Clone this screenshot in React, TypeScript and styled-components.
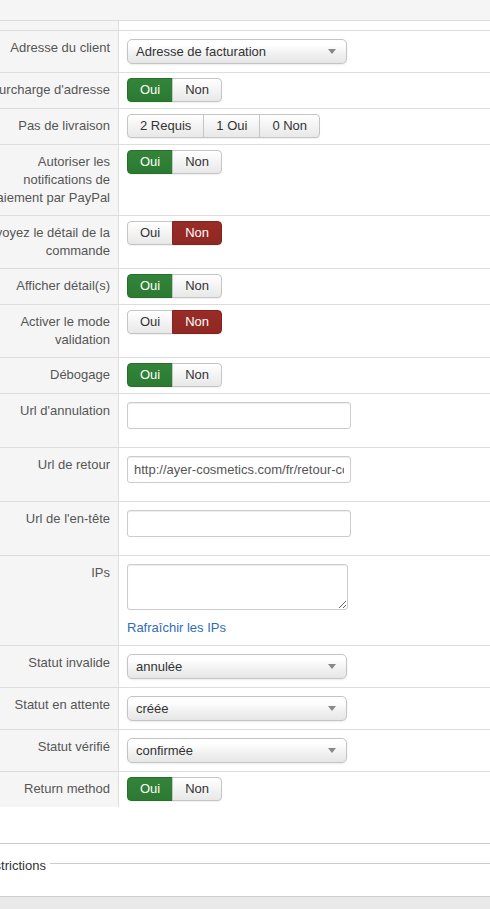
import * as React from 'react';
import styled, { createGlobalStyle, css } from 'styled-components';

const GlobalStyle = createGlobalStyle`
  html, body {
    margin: 0;
    padding: 0;
    background: #fff;
    overflow: hidden;
  }
  body {
    font-family: "Liberation Sans", Arial, sans-serif;
    font-size: 13px;
    color: #333;
  }
`;

const Page = styled.div`
  margin-left: -42px;
  width: calc(100% + 42px);
`;

const TopBar = styled.div`
  height: 20px;
  background: #f5f5f5;
`;

const Table = styled.div`
  display: flex;
  flex-direction: column;
`;

const Row = styled.div`
  display: flex;
  border-top: 1px solid #ddd;
`;

const Label = styled.div`
  box-sizing: border-box;
  width: 161px;
  flex: none;
  padding: 8px 8px 8px 12px;
  background: #f5f5f5;
  border-right: 1px solid #ddd;
  text-align: right;
  line-height: 18px;
  color: #555;
`;

const Cell = styled.div`
  flex: 1;
  padding: 5px 0 6px 8px;
`;

const SpacerCell = styled(Cell)`
  padding: 0;
  height: 9px;
`;

const Select = styled.div`
  box-sizing: border-box;
  width: 220px;
  height: 25px;
  margin: 3px 0 2px;
  padding: 0 8px;
  display: flex;
  align-items: center;
  justify-content: space-between;
  border: 1px solid #c4c4c4;
  border-radius: 5px;
  background: linear-gradient(#ffffff 20%, #f1f1f1 60%, #e6e6e6);
  box-shadow: 0 1px 2px rgba(0, 0, 0, 0.08);
  color: #333;
`;

const Caret = styled.span`
  width: 0;
  height: 0;
  margin-right: 2px;
  border-left: 4px solid transparent;
  border-right: 4px solid transparent;
  border-top: 5px solid #888;
`;

const BtnGroup = styled.div`
  display: inline-flex;
  height: 24px;
  border-radius: 4px;
  box-shadow: 0 1px 1px rgba(0, 0, 0, 0.06);
`;

type Tone = 'success' | 'danger' | 'none';

const Btn = styled.button<{ $tone: Tone }>`
  box-sizing: border-box;
  height: 24px;
  margin: 0;
  padding: 0 12px;
  font: inherit;
  font-size: 13px;
  line-height: 22px;
  color: #333;
  border: 1px solid #c5c5c5;
  background: linear-gradient(#ffffff, #e8e8e8);
  cursor: pointer;

  & + & {
    margin-left: -1px;
  }
  &:first-child {
    border-radius: 4px 0 0 4px;
  }
  &:last-child {
    border-radius: 0 4px 4px 0;
  }

  ${(p) =>
    p.$tone === 'success' &&
    css`
      color: #fff;
      border-color: #2a6e2d;
      background: linear-gradient(#33843a, #2c7a31);
    `}
  ${(p) =>
    p.$tone === 'danger' &&
    css`
      color: #fff;
      border-color: #842420;
      background: linear-gradient(#9a2c27, #8f2823);
    `}
`;

const TextInput = styled.input`
  box-sizing: border-box;
  display: block;
  width: 224px;
  height: 27px;
  margin: 3px 0 12px;
  padding: 0 6px;
  font: inherit;
  font-size: 13px;
  color: #555;
  border: 1px solid #ccc;
  border-radius: 3px;
  box-shadow: inset 0 1px 1px rgba(0, 0, 0, 0.075);
  outline: none;
`;

const TextArea = styled.textarea`
  box-sizing: border-box;
  display: block;
  width: 221px;
  height: 46px;
  margin: 3px 0 9px;
  padding: 4px 6px;
  font: inherit;
  border: 1px solid #ccc;
  border-radius: 3px;
  box-shadow: inset 0 1px 1px rgba(0, 0, 0, 0.075);
  outline: none;
`;

const Link = styled.a`
  display: block;
  line-height: 18px;
  margin-bottom: 2px;
  color: #2f6db5;
  text-decoration: none;
`;

const Divider = styled.div`
  margin-top: 36px;
  border-top: 1px solid #ccc;
`;

const Legend = styled.div`
  display: flex;
  align-items: center;
  gap: 4px;
  padding: 10px 0 0 20px;
  height: 32px;
  box-sizing: border-box;
  color: #333;

  &::after {
    content: '';
    flex: 1;
    margin-top: -3px;
    border-top: 1px solid #ccc;
  }
`;

const BottomBar = styled.div`
  height: 13px;
  margin-top: 20px;
  border-top: 1px solid #cfcfcf;
  background: #e9e9e9;
`;

type Choice = { text: string; tone: Tone };

const yesNo = (yes: boolean): Choice[] => [
  { text: 'Oui', tone: yes ? 'success' : 'none' },
  { text: 'Non', tone: yes ? 'none' : 'danger' },
];

const Toggle = ({ options }: { options: Choice[] }) => (
  <BtnGroup>
    {options.map((o) => (
      <Btn key={o.text} type="button" $tone={o.tone}>
        {o.text}
      </Btn>
    ))}
  </BtnGroup>
);

const Dropdown = ({ value }: { value: string }) => (
  <Select>
    <span>{value}</span>
    <Caret />
  </Select>
);

const Field = ({ label, children }: { label: string; children: React.ReactNode }) => (
  <Row>
    <Label>{label}</Label>
    <Cell>{children}</Cell>
  </Row>
);

export default function App() {
  return (
    <Page>
      <GlobalStyle />
      <TopBar />
      <Table>
        <Row>
          <Label as="div" style={{ padding: 0 }} />
          <SpacerCell />
        </Row>
        <Field label="Adresse du client">
          <Dropdown value="Adresse de facturation" />
        </Field>
        <Field label="Surcharge d'adresse">
          <Toggle options={yesNo(true)} />
        </Field>
        <Field label="Pas de livraison">
          <Toggle
            options={[
              { text: '2 Requis', tone: 'none' },
              { text: '1 Oui', tone: 'none' },
              { text: '0 Non', tone: 'none' },
            ]}
          />
        </Field>
        <Field label="Autoriser les notifications de paiement par PayPal">
          <Toggle options={yesNo(true)} />
        </Field>
        <Field label="Envoyez le détail de la commande">
          <Toggle options={yesNo(false)} />
        </Field>
        <Field label="Afficher détail(s)">
          <Toggle options={yesNo(true)} />
        </Field>
        <Field label="Activer le mode validation">
          <Toggle options={yesNo(false)} />
        </Field>
        <Field label="Débogage">
          <Toggle options={yesNo(true)} />
        </Field>
        <Field label="Url d'annulation">
          <TextInput readOnly value="" />
        </Field>
        <Field label="Url de retour">
          <TextInput readOnly value="http://ayer-cosmetics.com/fr/retour-commande" />
        </Field>
        <Field label="Url de l'en-tête">
          <TextInput readOnly value="" />
        </Field>
        <Field label="IPs">
          <TextArea readOnly value="" />
          <Link href="#">Rafraîchir les IPs</Link>
        </Field>
        <Field label="Statut invalide">
          <Dropdown value="annulée" />
        </Field>
        <Field label="Statut en attente">
          <Dropdown value="créée" />
        </Field>
        <Field label="Statut vérifié">
          <Dropdown value="confirmée" />
        </Field>
        <Field label="Return method">
          <Toggle options={yesNo(true)} />
        </Field>
      </Table>
      <Divider />
      <Legend>Restrictions</Legend>
      <BottomBar />
    </Page>
  );
}
